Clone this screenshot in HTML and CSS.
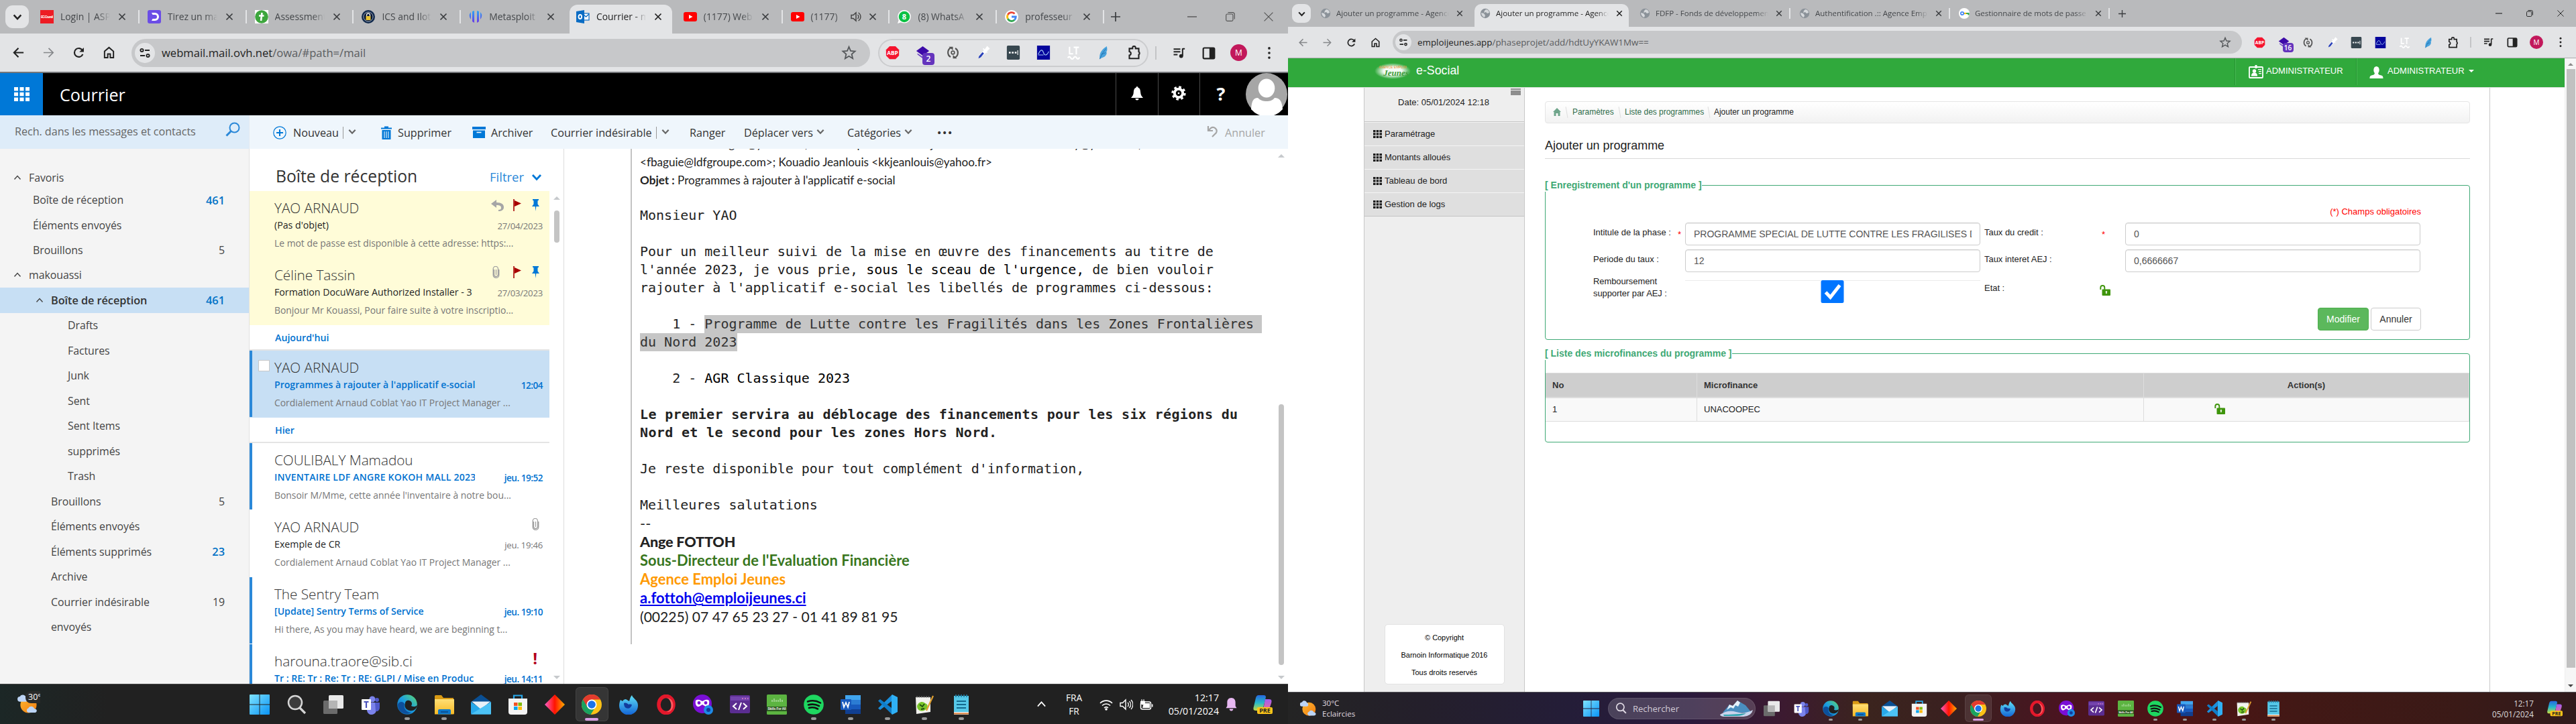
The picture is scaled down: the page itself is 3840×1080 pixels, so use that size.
FILE: index.html
```html
<!DOCTYPE html>
<html lang="fr">
<head>
<meta charset="utf-8">
<title>Courrier / e-Social</title>
<link rel="stylesheet" href="styles.css">
</head>
<body>
<svg class="defs" width="0" height="0" aria-hidden="true">
  <defs>
    <linearGradient id="g-win" x1="0" y1="0" x2="1" y2="1"><stop offset="0" stop-color="#7fe3ff"/><stop offset="1" stop-color="#0a94f5"/></linearGradient>
    <linearGradient id="g-edge" x1="0" y1="1" x2="1" y2="0"><stop offset="0" stop-color="#0c59a4"/><stop offset=".5" stop-color="#1b9de2"/><stop offset="1" stop-color="#5fdc6b"/></linearGradient>
    <linearGradient id="g-folder" x1="0" y1="0" x2="0" y2="1"><stop offset="0" stop-color="#ffdf75"/><stop offset="1" stop-color="#f7b924"/></linearGradient>
    <linearGradient id="g-diamond"><stop offset="0" stop-color="#ff5ec8"/><stop offset=".5" stop-color="#ff1300"/><stop offset="1" stop-color="#ffb000"/></linearGradient>
    <linearGradient id="g-fox" x1="0" y1="0" x2="0" y2="1"><stop offset="0" stop-color="#5fe0f5"/><stop offset="1" stop-color="#1263d6"/></linearGradient>
    <linearGradient id="g-cop1" x1="0" y1="0" x2="0" y2="1"><stop offset="0" stop-color="#2667e0"/><stop offset=".5" stop-color="#27b9c9"/><stop offset="1" stop-color="#c8dc3c"/></linearGradient>
    <linearGradient id="g-cop2" x1="0" y1="0" x2="0" y2="1"><stop offset="0" stop-color="#a15cf0"/><stop offset="1" stop-color="#f5718c"/></linearGradient>
    <linearGradient id="g-sun" x1="0" y1="0" x2="1" y2="1"><stop offset="0" stop-color="#ffb52e"/><stop offset="1" stop-color="#f07d12"/></linearGradient>
    <linearGradient id="g-meta" x1="0" y1="0" x2="0" y2="1"><stop offset="0" stop-color="#2ba6f5"/><stop offset="1" stop-color="#6a35e8"/></linearGradient>
  </defs>
  <symbol id="i-down" viewBox="0 0 12 12"><path d="M2 4l4 4.3L10 4" fill="none" stroke="currentColor" stroke-width="1.9"/></symbol>
  <symbol id="i-up" viewBox="0 0 12 12"><path d="M1.500 8.500L6 3.500l4.500 5" fill="none" stroke="currentColor" stroke-width="1.400"/></symbol>
  <symbol id="i-x" viewBox="0 0 12 12"><path d="M1.500 1.500l9 9M10.500 1.500l-9 9" stroke="currentColor" stroke-width="1.700"/></symbol>
  <symbol id="i-xthin" viewBox="0 0 12 12"><path d="M.5.500l11 11M11.500.500l-11 11" stroke="currentColor" stroke-width="1"/></symbol>
  <symbol id="i-min" viewBox="0 0 12 12"><path d="M0 6h12" stroke="currentColor" stroke-width="1.200"/></symbol>
  <symbol id="i-max" viewBox="0 0 12 12"><rect x=".6" y="2.600" width="8.800" height="8.800" rx="1.600" fill="none" stroke="currentColor"/><path d="M3 .6h5.800a2.600 2.600 0 0 1 2.600 2.600V9" fill="none" stroke="currentColor"/></symbol>
  <symbol id="i-plus" viewBox="0 0 14 14"><path d="M7 0v14M0 7h14" stroke="currentColor" stroke-width="1.700"/></symbol>
  <symbol id="i-back" viewBox="0 0 20 20"><path d="M18 10H3.500M10 3L3 10l7 7" fill="none" stroke="currentColor" stroke-width="2.200"/></symbol>
  <symbol id="i-fwd" viewBox="0 0 20 20"><path d="M2 10h14.500M10 3l7 7-7 7" fill="none" stroke="currentColor" stroke-width="1.800"/></symbol>
  <symbol id="i-reload" viewBox="0 0 20 20"><path d="M16.200 12.500A6.800 6.800 0 1 1 16 7" fill="none" stroke="currentColor" stroke-width="2.300"/><path d="M17.800 2v7h-7z" fill="currentColor"/></symbol>
  <symbol id="i-home" viewBox="0 0 20 20"><path d="M3 8l7-6 7 6v10h-5v-6H8v6H3z" fill="none" stroke="currentColor" stroke-width="2.100"/></symbol>
  <symbol id="i-tune" viewBox="0 0 18 18"><path d="M9 5h7M2 13h7" stroke="currentColor" stroke-width="2"/><circle cx="4.500" cy="5" r="2.100" fill="none" stroke="currentColor" stroke-width="1.900"/><circle cx="13.500" cy="13" r="2.100" fill="none" stroke="currentColor" stroke-width="1.900"/></symbol>
  <symbol id="i-star" viewBox="0 0 24 24"><path d="M12 3l2.600 6.300 6.900.6-5.200 4.500 1.600 6.700L12 17.500 6.100 21.100l1.600-6.700L2.500 9.900l6.900-.6z" fill="none" stroke="currentColor" stroke-width="1.900"/></symbol>
  <symbol id="i-abp" viewBox="0 0 24 24"><path d="M7 1h10l6 6v10l-6 6H7l-6-6V7z" fill="#f5142e"/><text x="12" y="16" font-size="9.500" font-weight="700" text-anchor="middle" fill="#fff" font-family="Open Sans, sans-serif">ABP</text></symbol>
  <symbol id="i-stack" viewBox="0 0 24 24"><path d="M12 1l11 8-11 8L1 9z" fill="#3d0aa8"/><path d="M3 13l9 6 9-6v2l-9 7-9-7z" fill="#6a3fc4"/></symbol>
  <symbol id="i-sync" viewBox="0 0 24 24"><path d="M9 3.500a9 9 0 0 0-1 16M15 20.500a9 9 0 0 0 1-16" fill="none" stroke="#555" stroke-width="2.500"/><path d="M5 2h7v6zM19 22h-7v-6z" fill="#555"/><circle cx="12" cy="12" r="2.700" fill="none" stroke="#555" stroke-width="2"/></symbol>
  <symbol id="i-drop" viewBox="0 0 24 24"><path d="M4 22l1-5 9-10 4 4L8 20z" fill="#fff"/><path d="M4 22l1-4 6-7 2.500 2.500L8 20z" fill="#2940b8"/><path d="M12 5l7 7M15 8l4-6 3 3-5 5z" stroke="#fff" stroke-width="2" fill="#fff"/></symbol>
  <symbol id="i-dots3" viewBox="0 0 24 24"><rect x="1" y="0" width="22" height="24" rx="2" fill="#37474f"/><path d="M4.500 10.500h3v3h-3zM9.500 10.500h3v3h-3zM14.500 10.500h3v3h-3zM19 8h1.300v8H19z" fill="#fff"/></symbol>
  <symbol id="i-wave" viewBox="0 0 24 24"><rect x="1" width="22" height="24" fill="#05059c"/><path d="M3 15c4-9 7-9 9-3s6 5 9-2M3 16h9" fill="none" stroke="#9fc3f0" stroke-width="1.300"/></symbol>
  <symbol id="i-lt" viewBox="0 0 24 24"><path d="M5 2v12h6M12 3h9M16.500 3v12M2 21q2.500-4 5 0t5 0 5 0 5-1" fill="none" stroke="#fff" stroke-width="2.400"/></symbol>
  <symbol id="i-feather" viewBox="0 0 24 24"><path d="M5 23c-1-8 1-15 12-22 1 5 1 8-1 10 2 0 1 8-8 10z" fill="#4aa3dd"/><path d="M5 23c3-7 5-11 11-18M8 15l7-3" stroke="#1d6fae" fill="none"/></symbol>
  <symbol id="i-puzzle" viewBox="0 0 24 24"><path d="M4 5h5.500V3.500a2.500 2.500 0 0 1 5 0V5H20v5.500a3 3 0 0 1 0 5V22H4v-5.500a3.200 3.200 0 0 0 0-6.300z" fill="none" stroke="#222" stroke-width="2.400"/></symbol>
  <symbol id="i-queue" viewBox="0 0 24 24"><path d="M3 5h12M3 10h12M3 15h7M19 4v13M19 4.500h4" stroke="#222" stroke-width="2.400" fill="none"/><circle cx="16.500" cy="17.500" r="3.500" fill="#222"/></symbol>
  <symbol id="i-panel" viewBox="0 0 24 24"><rect x="2" y="3" width="20" height="19" rx="2" fill="none" stroke="#222" stroke-width="2.600"/><path d="M13 3h9v19h-9z" fill="#222"/></symbol>
  <symbol id="i-kebab" viewBox="0 0 24 24"><circle cx="12" cy="3.500" r="2.200" fill="#222"/><circle cx="12" cy="12" r="2.200" fill="#222"/><circle cx="12" cy="20.500" r="2.200" fill="#222"/></symbol>

  <symbol id="f-ec" viewBox="0 0 20 20"><rect width="20" height="20" fill="#ed1c24"/><text x="10" y="11.500" font-size="5" font-weight="700" textLength="18" text-anchor="middle" fill="#fff" font-family="Liberation Sans, sans-serif">EC-Council</text></symbol>
  <symbol id="f-tirez" viewBox="0 0 20 20"><rect width="20" height="20" rx="3" fill="#6b4de6"/><path d="M6 4h5a6 6 0 0 1 0 12H6l1.500-3H11a3 3 0 0 0 0-6H7.500z" fill="#fff"/></symbol>
  <symbol id="f-assess" viewBox="0 0 20 20"><rect width="20" height="20" fill="#fff"/><circle cx="10" cy="10" r="9.800" fill="#3da63d"/><path d="M10.500 4L9 16M6 8.500h7.500" stroke="#fff" stroke-width="2.600"/></symbol>
  <symbol id="f-ics" viewBox="0 0 20 20"><circle cx="10" cy="10" r="10" fill="#122a4d"/><circle cx="10" cy="10" r="7" fill="#0a1730" stroke="#c8d2e0" stroke-width=".8"/><rect x="6.500" y="9" width="7" height="6" fill="#e8c333"/><path d="M7.500 9V7.500a2.500 2.500 0 0 1 5 0V9" fill="none" stroke="#e8e8e8" stroke-width="1.400"/></symbol>
  <symbol id="f-meta" viewBox="0 0 20 20"><path d="M3 3v11a9 9 0 0 1-2-8zM8 1v18l-3-2V2zM12 1v18l3-2V2zM17 3v11a9 9 0 0 0 2-8z" fill="url(#g-meta)"/></symbol>
  <symbol id="f-owa" viewBox="0 0 20 20"><rect x="10" y="5" width="9" height="10" fill="#fff" stroke="#0a6cc4" stroke-width="1.200"/><path d="M11 7l3.500 3L19 6" fill="none" stroke="#0a6cc4" stroke-width="1.400"/><path d="M0 2l12-2v20L0 18z" fill="#0a6cc4"/><ellipse cx="5.800" cy="10" rx="2.300" ry="3" fill="none" stroke="#fff" stroke-width="1.800"/></symbol>
  <symbol id="f-yt" viewBox="0 0 20 20"><rect y="3" width="20" height="14" rx="3" fill="#f00"/><path d="M8 7l5.500 3L8 13z" fill="#fff"/></symbol>
  <symbol id="f-wa" viewBox="0 0 20 20"><circle cx="10" cy="9.800" r="9.800" fill="#fff"/><path d="M0 20l2-6 4 4z" fill="#fff"/><circle cx="10" cy="10" r="8.300" fill="#0cc143"/><text x="10" y="14" font-size="11" font-weight="700" text-anchor="middle" fill="#fff" font-family="Open Sans, sans-serif">8</text></symbol>
  <symbol id="f-google" viewBox="0 0 20 20"><circle cx="10" cy="10" r="10" fill="#fff"/><g fill="none" stroke-width="2.800"><path d="M14.500 5.500A6.400 6.400 0 0 0 4.300 7" stroke="#ea4335"/><path d="M4.300 7a6.400 6.400 0 0 0 0 6" stroke="#fbbc05"/><path d="M4.300 13a6.400 6.400 0 0 0 10 1.800" stroke="#34a853"/><path d="M14.300 14.800A6.400 6.400 0 0 0 16.300 10H10" stroke="#4285f4"/></g></symbol>
  <symbol id="f-globe" viewBox="0 0 16 16"><circle cx="8" cy="8" r="7.200" fill="#8b9299"/><path d="M9 2c3 0 5 3 5 5l-3 1-2-2-3 1 1-3zM2 7l4 1 2 3-1 3C4 13 2 10 2 7z" fill="#d5d8db"/></symbol>
  <symbol id="f-key" viewBox="0 0 16 16"><circle cx="8" cy="8" r="8" fill="#fff"/><circle cx="5" cy="8" r="2.200" fill="none" stroke="#4285f4" stroke-width="1.700"/><path d="M8 8h3" stroke="#fbbc05" stroke-width="2.200"/><path d="M11 8h3.500v2.500" stroke="#34a853" stroke-width="2.200" fill="none"/></symbol>
  <symbol id="i-audio" viewBox="0 0 16 16"><path d="M1 5.500h3L8 2v12l-4-3.500H1z" fill="none" stroke="#444" stroke-width="1.500"/><path d="M10.500 5a4 4 0 0 1 0 6M11.500 2a7 7 0 0 1 0 12" fill="none" stroke="#444" stroke-width="1.400"/></symbol>

  <symbol id="o-waffle" viewBox="0 0 23 21"><path d="M0 0h6v5.500H0zM8.500 0h6v5.500h-6zM17 0h6v5.500h-6zM0 7.700h6v5.500H0zM8.500 7.700h6v5.500h-6zM17 7.700h6v5.500h-6zM0 15.500h6V21H0zM8.500 15.500h6V21h-6zM17 15.500h6V21h-6z" fill="#fff"/></symbol>
  <symbol id="o-bell" viewBox="0 0 20 22"><path d="M10 1c1 0 1.500.8 1.500 1.700C14.500 3.500 15 7 15.200 10c.2 3 1.300 5.500 3.800 8H1c2.500-2.500 3.600-5 3.800-8C5 7 5.500 3.500 8.500 2.700 8.500 1.800 9 1 10 1zM7.500 19h5a2.500 2.500 0 0 1-5 0z" fill="#fff"/></symbol>
  <symbol id="o-gear" viewBox="0 0 22 22"><circle cx="11" cy="11" r="6.200" fill="none" stroke="#fff" stroke-width="4"/><circle cx="11" cy="11" r="9.200" fill="none" stroke="#fff" stroke-width="3" stroke-dasharray="3.600 3.625"/><circle cx="11" cy="11" r="1.300" fill="#fff"/></symbol>
  <symbol id="o-search" viewBox="0 0 22 22"><circle cx="13.500" cy="8.500" r="7" fill="none" stroke="#2b88d8" stroke-width="2"/><path d="M8.500 13.500L1.500 20.500" stroke="#2b88d8" stroke-width="3"/></symbol>
  <symbol id="o-add" viewBox="0 0 20 20"><circle cx="10" cy="10" r="9.200" fill="none" stroke="#0078d7" stroke-width="1.200"/><path d="M10 5v10M5 10h10" stroke="#0078d7" stroke-width="2"/></symbol>
  <symbol id="o-trash" viewBox="0 0 16 20"><path d="M0 2.500h5V.5h6v2h5v2H0zM1.500 6h13v14h-13z" fill="#0078d7"/><path d="M5 8v10M8 8v10M11 8v10" stroke="#fff" stroke-width="1"/></symbol>
  <symbol id="o-archive" viewBox="0 0 20 17"><path d="M0 0h20v4H0zM1 5.500h18V17H1z" fill="#0078d7"/><path d="M6.500 8.500h7" stroke="#fff" stroke-width="1.600"/></symbol>
  <symbol id="o-undo" viewBox="0 0 16 18"><path d="M2 1v7h7M2 8l4-4a5.500 5.500 0 0 1 8 7L8 17" fill="none" stroke="#a6a6a6" stroke-width="2.200"/></symbol>
  <symbol id="o-reply" viewBox="0 0 19 17"><path d="M8 0L0 6l8 6V8c5 0 7 1 7 4 0 2-1 3-4 3v2c5 0 8-2 8-6 0-4-3-7-11-7z" fill="#a6a6a6"/></symbol>
  <symbol id="o-flag" viewBox="0 0 13 18"><path d="M1 0v18" stroke="#a80000" stroke-width="1.600"/><path d="M2 2l10 4.500L2 11z" fill="#a80000"/></symbol>
  <symbol id="o-pin" viewBox="0 0 11 18"><path d="M1 0h9v1.500L8.500 2.500v5L11 11H6.300l-.8 7-.8-7H0l2.500-3.500v-5L1 1.500z" fill="#0078d7"/></symbol>
  <symbol id="o-clip" viewBox="0 0 11 18"><path d="M2.500 5v7.500a3 3 0 0 0 6 0V4a3.400 3.400 0 0 0-7.300 0v9.200a4.300 4.300 0 0 0 8.600 0V5M5.500 5v8" fill="none" stroke="#a0a0a0" stroke-width="1.300"/></symbol>
  <symbol id="o-avatar" viewBox="0 0 62 63"><ellipse cx="31" cy="31.500" rx="31" ry="31.500" fill="#a6a6a6"/><ellipse cx="31" cy="22.500" rx="12.300" ry="14" fill="#fff"/><path d="M8 54c1-12 3-17 10-17 4 4 8 5 13 5s9-1 12-5c8 0 11 5 12 17a31 31 0 0 1-47 0z" fill="#fff"/></symbol>

  <symbol id="t-win" viewBox="0 0 30 30"><path d="M0 1a1 1 0 0 1 1-1h13.500v14.500H0zM15.500 0H29a1 1 0 0 1 1 1v13.500H15.500zM0 15.500h14.500V30H1a1 1 0 0 1-1-1zM15.500 15.500H30V29a1 1 0 0 1-1 1H15.500z" fill="url(#g-win)"/></symbol>
  <symbol id="t-search" viewBox="0 0 30 30"><circle cx="13" cy="12" r="10" fill="#3c3c3c" stroke="#d5d5d5" stroke-width="2.500"/><path d="M20 20l8 8" stroke="#d5d5d5" stroke-width="3.200"/></symbol>
  <symbol id="t-mag" viewBox="0 0 30 30"><circle cx="13" cy="12" r="10" fill="none" stroke="#e0dae4" stroke-width="3"/><path d="M20 20l8 8" stroke="#e0dae4" stroke-width="3.600"/></symbol>
  <symbol id="t-view" viewBox="0 0 30 30"><rect x="0" y="9" width="21" height="20" rx="1.500" fill="#6b6b6b"/><rect x="8" y="1" width="22" height="20" rx="1.500" fill="#e9e9e9"/><path d="M8 9h13v12H8z" fill="#b5b5b5"/></symbol>
  <symbol id="t-teams" viewBox="0 0 30 30"><circle cx="18" cy="7" r="4.500" fill="#7b83eb"/><circle cx="25" cy="8" r="3" fill="#5059c9"/><path d="M10 12h14v10a7 7 0 0 1-14 2z" fill="#7b83eb"/><path d="M22 12h7v8a5 5 0 0 1-6 5z" fill="#5059c9"/><rect x="2" y="7" width="14" height="16" rx="1" fill="#fff"/><path d="M5.500 11h7M9 11v9" stroke="#4b53bc" stroke-width="2.200"/></symbol>
  <symbol id="t-edge" viewBox="0 0 30 30"><circle cx="15" cy="15" r="14.800" fill="url(#g-edge)"/><path d="M12 13c0-3 3-5 6-4 4 1 5 5 3 8 3 2 7 1 9-1-1 6-6 9-11 8-6-1-9-6-7-11z" fill="#202020"/><path d="M11 14c-2 7 3 13 10 13-9 5-20-1-20-12 2-5 8-5 10-1z" fill="#0d4f9b"/></symbol>
  <symbol id="t-folder" viewBox="0 0 30 30"><path d="M1 2.500a1.500 1.500 0 0 1 1.500-1.500H11l3 4h15v6H1z" fill="#d99a14"/><path d="M1 7h29v21a1.500 1.500 0 0 1-1.500 1.500H1z" fill="url(#g-folder)"/><path d="M6 29.500V24a2 2 0 0 1 2-2h15a2 2 0 0 1 2 2v5.500z" fill="#0d78c9"/><path d="M10 26h11" stroke="#0a4f93" stroke-width="2"/></symbol>
  <symbol id="t-mail" viewBox="0 0 30 30"><path d="M0 11L15 0l15 11-15 9z" fill="#0a4f93"/><path d="M3 11h24L15 22z" fill="#e9f1f8"/><path d="M0 11l15 10L30 11v17a1.500 1.500 0 0 1-1.500 1.500h-27A1.500 1.500 0 0 1 0 28z" fill="#28a8ea"/><path d="M1 10.500h28L15 22z" fill="#e9f1f8"/><path d="M0 29.500L30 11v18.500z" fill="#4cc2f5"/></symbol>
  <symbol id="t-store" viewBox="0 0 30 30"><path d="M9 7V1.500h12V7" fill="none" stroke="#28a8ea" stroke-width="2.200"/><path d="M1 6h28v20a4 4 0 0 1-4 4H5a4 4 0 0 1-4-4z" fill="#f3f3f3"/><path d="M9 12h5.500v5H9z" fill="#f25022"/><path d="M15.500 12H21v5h-5.500z" fill="#7fba00"/><path d="M9 18h5.500v5H9z" fill="#00a4ef"/><path d="M15.500 18H21v5h-5.500z" fill="#ffb900"/></symbol>
  <symbol id="t-diamond" viewBox="0 0 30 30"><path d="M15 0l15 15-15 15L0 15z" fill="url(#g-diamond)"/></symbol>
  <symbol id="t-chrome" viewBox="0 0 30 30"><circle cx="15" cy="15" r="15" fill="#fbc116"/><path d="M2 7.500A15 15 0 0 0 13.500 30L21 18z" fill="#1aa260"/><path d="M15 7.500h13a15 15 0 0 0-26 0l6.500 11z" fill="#e33b2e"/><circle cx="15" cy="15" r="7.500" fill="#fff"/><circle cx="15" cy="15" r="5.800" fill="#1a73e8"/></symbol>
  <symbol id="t-fox" viewBox="0 0 30 30"><path d="M3 8l3 2c1-2 3-3 5-3l5 3c1-4 2-7 4-9 1 5 9 7 9 15a14 14 0 0 1-28 1c0-4 1-7 2-9z" fill="url(#g-fox)"/><path d="M8 13c3-1 5 0 7 2 2-1 4 0 5 0-1 5-5 7-9 5-2-1-3-4-3-7z" fill="#123c9c"/></symbol>
  <symbol id="t-opera" viewBox="0 0 30 30"><ellipse cx="15" cy="15" rx="11" ry="12.600" fill="none" stroke="#e3182b" stroke-width="5.500"/><path d="M15 5c8 0 12 20 0 21 14 2 14-22 0-21z" fill="#ff5a5f"/></symbol>
  <symbol id="t-mask" viewBox="0 0 30 30"><circle cx="14" cy="14" r="14" fill="#7a0fd6"/><path d="M4 9c4-3 8 0 10 1 2-1 6-4 10-1 1 5-1 10-5 9l-5-3-5 3c-4 1-6-4-5-9z" fill="#fff"/><circle cx="9" cy="12.500" r="2.400" fill="#7a0fd6"/><circle cx="19" cy="12.500" r="2.400" fill="#7a0fd6"/><circle cx="23" cy="23" r="7" fill="#1e8ae6"/><circle cx="23" cy="23" r="3" fill="#123c9c"/></symbol>
  <symbol id="t-code" viewBox="0 0 30 30"><rect y="1" width="30" height="27" rx="2" fill="#5b2d91"/><path d="M1 3h28v6H1z" fill="#7444ad"/><path d="M18 6h2M22 6h2M26 6h1.500" stroke="#e080c8" stroke-width="1.500"/><path d="M10 13l-5 4.500 5 4.500M20 13l5 4.500-5 4.500M17 12l-4 11" fill="none" stroke="#fff" stroke-width="2"/></symbol>
  <symbol id="t-skills" viewBox="0 0 30 30"><rect width="30" height="30" rx="1.500" fill="#5cb441"/><path d="M0 18h30v7H0z" fill="#2d5a21"/><path d="M8 8v3M11 6v5M14 8v3M17 8v3M20 6v5M23 8v3" stroke="#d8f0d0"/><text x="15" y="23.300" font-size="5" font-weight="700" textLength="27" lengthAdjust="spacingAndGlyphs" text-anchor="middle" fill="#fff" font-family="Liberation Sans, sans-serif">Skills For All</text></symbol>
  <symbol id="t-spotify" viewBox="0 0 30 30"><circle cx="15" cy="15" r="14.800" fill="#1ed760"/><path d="M6 10.500c6-2 13-1.500 19 2M7 15.500c5-1.500 11-1 16 1.700M8 20c4-1.300 9-.8 13 1.500" fill="none" stroke="#111" stroke-width="2.600" stroke-linecap="round"/></symbol>
  <symbol id="t-word" viewBox="0 0 30 30"><path d="M7 1h23v7H7z" fill="#41a5ee"/><path d="M7 8h23v7H7z" fill="#2b7cd3"/><path d="M7 15h23v7H7z" fill="#185abd"/><path d="M7 22h23v7H7z" fill="#103f91"/><rect y="7" width="16" height="16" rx="1" fill="#185abd"/><path d="M3 11l2 8 3-7 3 7 2-8" fill="none" stroke="#fff" stroke-width="1.800"/></symbol>
  <symbol id="t-vscode" viewBox="0 0 30 30"><path d="M22 0l8 4v22l-8 4-1-1V1z" fill="#2fb0f5"/><path d="M21 1v9L4 23l-3-2.500z" fill="#1a8fdc"/><path d="M21 29v-9L4 7 1 9.500z" fill="#0f7dc9"/></symbol>
  <symbol id="t-npp" viewBox="0 0 30 30"><path d="M2 4h22v22L3 29z" fill="#f2f2ee"/><path d="M3 3.500h20" stroke="#666" stroke-width="2" stroke-dasharray="2 1.500"/><path d="M4 17c2-6 8-8 12-4 5 1 5 8 0 10-4 3-12 2-12-6z" fill="#79c62a"/><path d="M8 15l4 3 3-4M10 22l5-1" stroke="#1e4a12" stroke-width="1.800" fill="none"/><path d="M28 2L18 24" stroke="#e0a030" stroke-width="2.200"/></symbol>
  <symbol id="t-note" viewBox="0 0 30 30"><path d="M4 2h22v26H4z" fill="#56c8e8"/><path d="M4 26h22v4H4z" fill="#e6e6e6"/><path d="M4 28.500h22" stroke="#d9742a" stroke-width="1.800"/><path d="M8 10h14M8 15h14M8 20h14" stroke="#146a8f" stroke-width="2"/><path d="M7 0v4M11 0v4M15 0v4M19 0v4M23 0v4" stroke="#1d7fa5" stroke-width="1.600"/></symbol>
  <symbol id="t-weather" viewBox="0 0 30 30"><circle cx="16" cy="16" r="12.500" fill="url(#g-sun)"/><path d="M3 11a4 4 0 0 1 0-8c2-4 8-3 9 1 3 0 4 7 0 7zM16 28a3.600 3.600 0 0 1 0-7c2-4 8-3 9 1 5 0 5 6 0 6z" fill="#bcd4f5"/></symbol>
  <symbol id="t-copilot" viewBox="0 0 30 30"><path d="M9 1h8c2 0 3 1 3 3l-4 16c-1 3-3 4-5 4H5c-4 0-4-3-3-6L5 5c1-3 2-4 4-4z" fill="url(#g-cop1)"/><path d="M19 7h6c4 0 4 3 3 6l-3 9c-1 3-2 4-4 4h-7c3-4 4-16 5-19z" fill="url(#g-cop2)"/><rect x="7" y="19" width="23" height="10" rx="2" fill="#fcc419"/><text x="18.500" y="27.300" font-size="9" font-weight="700" text-anchor="middle" fill="#222" font-family="Open Sans, sans-serif">PRE</text></symbol>
  <symbol id="y-wifi" viewBox="0 0 20 20"><path d="M1 8a12.500 12.500 0 0 1 18 0M4 11.500a8.500 8.500 0 0 1 12 0M7 15a4.500 4.500 0 0 1 6 0" fill="none" stroke="#fff" stroke-width="1.600"/><circle cx="10" cy="17" r="1.800" fill="#fff"/></symbol>
  <symbol id="y-vol" viewBox="0 0 20 20"><path d="M1 7.500h3.500L9 3v14l-4.500-4.500H1z" fill="none" stroke="#fff" stroke-width="1.400"/><path d="M12 7a4 4 0 0 1 0 6M14.500 5a7 7 0 0 1 0 10M17 3a10 10 0 0 1 0 14" fill="none" stroke="#fff" stroke-width="1.300"/></symbol>
  <symbol id="y-bat" viewBox="0 0 20 20"><rect x="1.500" y="6" width="15" height="11" rx="2.500" fill="none" stroke="#fff" stroke-width="1.500"/><path d="M6 8h9v7H4z" fill="#fff"/><path d="M18.700 9.500v4" stroke="#fff" stroke-width="1.600"/><path d="M3 2v3M6 2v3M1.500 5h6v2a3 3 0 0 1-6 0z" fill="#fff" stroke="#fff"/></symbol>
  <symbol id="y-bell" viewBox="0 0 18 22"><path d="M9 1c4 0 6.500 3 6.500 7v6l2 3H.5l2-3V8C2.500 4 5 1 9 1zM6 18.500h6a3 3 0 0 1-6 0z" fill="#e8b9f2"/></symbol>
  <symbol id="e-lock" viewBox="0 0 16 16"><path d="M1.300 7V4a3 3 0 0 1 6 0v3" fill="none" stroke="#3f950c" stroke-width="1.900"/><rect x="3.500" y="6.500" width="12.500" height="9.500" rx="1" fill="#3f950c"/><path d="M9 9.500h1.800L10.300 13H9.500z" fill="#fff" stroke="#fff" stroke-width=".5"/></symbol>
  <symbol id="e-grid" viewBox="0 0 13 12"><path d="M0 0h3.500v3.300H0zM4.700 0h3.500v3.300H4.700zM9.400 0h3.600v3.300H9.400zM0 4.300h3.500v3.300H0zM4.700 4.300h3.500v3.300H4.700zM9.400 4.300h3.600v3.300H9.400zM0 8.700h3.500V12H0zM4.700 8.700h3.500V12H4.700zM9.400 8.700h3.600V12H9.400z" fill="#1c1c1c"/></symbol>
  <symbol id="e-home" viewBox="0 0 12 12"><path d="M6 0l6 6h-1.500v6h-3V8h-3v4h-3V6H0z" fill="#6fa58b"/></symbol>
  <symbol id="e-badge" viewBox="0 0 22 20"><rect x="1" y="3" width="20" height="16" rx="1" fill="none" stroke="#fff" stroke-width="1.800"/><path d="M9.500 0h3v5h-3z" fill="#fff"/><circle cx="8.500" cy="9" r="2.700" fill="#fff"/><path d="M4 16.500c0-4 2-5 4.500-5s4.500 1 4.500 5zM14 6h5v1.200h-5zM15 9h4v1.200h-4zM15 12h4v1.200h-4z" fill="#fff"/></symbol>
  <symbol id="e-user" viewBox="0 0 20 18"><ellipse cx="10" cy="5.500" rx="4.200" ry="5.500" fill="#fff"/><path d="M7.500 9h5c0 3 1 3.500 4 4.300 3 .7 3.500 2 3.500 4.700H0c0-2.700.5-4 3.500-4.700 3-.8 4-1.300 4-4.300z" fill="#fff"/></symbol>
</svg>

<main class="desktop">

<section class="screen screen-left">
  <div class="tabstrip">
    <button class="tab-search"><svg><use href="#i-down"/></svg></button>
    <div class="tabs">
      <div class="tab"><svg class="fav"><use href="#f-ec"/></svg><span class="ttl">Login | ASP</span><svg class="x"><use href="#i-x"/></svg></div>
      <div class="tab"><svg class="fav"><use href="#f-tirez"/></svg><span class="ttl">Tirez un ma</span><svg class="x"><use href="#i-x"/></svg></div>
      <div class="tab"><svg class="fav"><use href="#f-assess"/></svg><span class="ttl">Assessment</span><svg class="x"><use href="#i-x"/></svg></div>
      <div class="tab"><svg class="fav"><use href="#f-ics"/></svg><span class="ttl">ICS and Ilot</span><svg class="x"><use href="#i-x"/></svg></div>
      <div class="tab nosep"><svg class="fav"><use href="#f-meta"/></svg><span class="ttl">Metasploit</span><svg class="x"><use href="#i-x"/></svg></div>
      <div class="tab active"><svg class="fav"><use href="#f-owa"/></svg><span class="ttl">Courrier - m</span><svg class="x"><use href="#i-x"/></svg></div>
      <div class="tab"><svg class="fav yt"><use href="#f-yt"/></svg><span class="ttl">(1177) Web</span><svg class="x"><use href="#i-x"/></svg></div>
      <div class="tab"><svg class="fav yt"><use href="#f-yt"/></svg><span class="ttl ttl-audio">(1177) </span><svg class="aud"><use href="#i-audio"/></svg><svg class="x"><use href="#i-x"/></svg></div>
      <div class="tab"><svg class="fav"><use href="#f-wa"/></svg><span class="ttl">(8) WhatsA</span><svg class="x"><use href="#i-x"/></svg></div>
      <div class="tab"><svg class="fav"><use href="#f-google"/></svg><span class="ttl">professeur</span><svg class="x"><use href="#i-x"/></svg></div>
    </div>
    <svg class="newtab"><use href="#i-plus"/></svg>
    <div class="winbtns"><svg><use href="#i-min"/></svg><svg><use href="#i-max"/></svg><svg><use href="#i-xthin"/></svg></div>
  </div>
  <div class="toolbar">
    <div class="nav"><svg><use href="#i-back"/></svg><svg class="off"><use href="#i-fwd"/></svg><svg><use href="#i-reload"/></svg><svg><use href="#i-home"/></svg></div>
    <div class="omnibox"><span class="tune"><svg><use href="#i-tune"/></svg></span><span class="url">webmail.mail.ovh.net<i>/owa/#path=/mail</i></span><svg class="bookmark"><use href="#i-star"/></svg></div>
    <div class="exts"><svg><use href="#i-abp"/></svg><span class="ext"><svg><use href="#i-stack"/></svg><b class="count">2</b></span><svg><use href="#i-sync"/></svg><svg><use href="#i-drop"/></svg><svg><use href="#i-dots3"/></svg><svg><use href="#i-wave"/></svg><svg><use href="#i-lt"/></svg><svg><use href="#i-feather"/></svg><svg><use href="#i-puzzle"/></svg></div>
    <div class="tools"><svg><use href="#i-queue"/></svg><svg><use href="#i-panel"/></svg><span class="profile">M</span><svg><use href="#i-kebab"/></svg></div>
  </div>

  <header class="owa-head">
    <div class="waffle"><svg><use href="#o-waffle"/></svg></div>
    <h1>Courrier</h1>
    <div class="owa-actions"><span><svg><use href="#o-bell"/></svg></span><span><svg><use href="#o-gear"/></svg></span><span class="help">?</span><svg class="avatar"><use href="#o-avatar"/></svg></div>
  </header>

  <div class="owa-bar">
    <div class="owa-search"><span>Rech. dans les messages et contacts</span><svg><use href="#o-search"/></svg></div>
    <div class="commands">
      <svg class="c-add"><use href="#o-add"/></svg>
      <span class="cmd">Nouveau<i class="bar"></i><svg class="chev"><use href="#i-down"/></svg></span>
      <svg class="c-trash"><use href="#o-trash"/></svg><span>Supprimer</span>
      <svg class="c-arch"><use href="#o-archive"/></svg><span>Archiver</span>
      <span class="cmd">Courrier indésirable<i class="bar"></i><svg class="chev"><use href="#i-down"/></svg></span>
      <span>Ranger</span>
      <span class="cmd">Déplacer vers<svg class="chev wide"><use href="#i-down"/></svg></span>
      <span class="cmd">Catégories<svg class="chev wide"><use href="#i-down"/></svg></span>
      <span class="more">•••</span>
      <svg class="c-undo"><use href="#o-undo"/></svg><span class="muted">Annuler</span>
    </div>
  </div>

  <div class="owa-main">
    <nav class="folders">
      <div class="root first-root"><svg><use href="#i-up"/></svg>Favoris</div>
      <div class="fav-item">Boîte de réception<b>461</b></div>
      <div class="fav-item">Éléments envoyés</div>
      <div class="fav-item">Brouillons<em>5</em></div>
      <div class="root"><svg><use href="#i-up"/></svg>makouassi</div>
      <div class="selected"><svg><use href="#i-up"/></svg>Boîte de réception<b>461</b></div>
      <div class="sub">Drafts</div>
      <div class="sub">Factures</div>
      <div class="sub">Junk</div>
      <div class="sub">Sent</div>
      <div class="sub">Sent Items</div>
      <div class="sub">supprimés</div>
      <div class="sub">Trash</div>
      <div class="top">Brouillons<em>5</em></div>
      <div class="top">Éléments envoyés</div>
      <div class="top">Éléments supprimés<b>23</b></div>
      <div class="top">Archive</div>
      <div class="top">Courrier indésirable<em>19</em></div>
      <div class="top">envoyés</div>
    </nav>

    <section class="list">
      <div class="list-head"><h2>Boîte de réception</h2><span class="filter">Filtrer<svg><use href="#i-down"/></svg></span></div>
      <div class="list-body">
        <div class="msgs">
          <article class="msg pinned"><div class="who">YAO ARNAUD<span class="marks"><svg class="m-reply"><use href="#o-reply"/></svg><svg class="m-flag"><use href="#o-flag"/></svg><svg class="m-pin"><use href="#o-pin"/></svg></span></div><div class="subj"><span>(Pas d'objet)</span><time>27/04/2023</time></div><div class="prev">Le mot de passe est disponible à cette adresse: https:...</div></article>
          <article class="msg pinned"><div class="who">Céline Tassin<span class="marks"><svg class="m-clip"><use href="#o-clip"/></svg><svg class="m-flag"><use href="#o-flag"/></svg><svg class="m-pin"><use href="#o-pin"/></svg></span></div><div class="subj"><span>Formation DocuWare Authorized Installer - 3</span><time>27/03/2023</time></div><div class="prev">Bonjour Mr Kouassi, Pour faire suite à votre inscriptio...</div></article>
          <div class="group">Aujourd'hui</div>
          <article class="msg current unread"><i class="check"></i><div class="who">YAO ARNAUD</div><div class="subj"><span>Programmes à rajouter à l'applicatif e-social</span><time>12:04</time></div><div class="prev">Cordialement Arnaud Coblat Yao IT Project Manager ...</div></article>
          <div class="group">Hier</div>
          <article class="msg unread"><div class="who">COULIBALY Mamadou</div><div class="subj wide-subj"><span>INVENTAIRE LDF ANGRE KOKOH MALL 2023</span><time>jeu. 19:52</time></div><div class="prev">Bonsoir M/Mme, cette année l'inventaire à notre bou...</div></article>
          <article class="msg"><div class="who">YAO ARNAUD<span class="marks single"><svg class="m-clip"><use href="#o-clip"/></svg></span></div><div class="subj"><span>Exemple de CR</span><time>jeu. 19:46</time></div><div class="prev">Cordialement Arnaud Coblat Yao IT Project Manager ...</div></article>
          <article class="msg unread"><div class="who">The Sentry Team</div><div class="subj"><span>[Update] Sentry Terms of Service</span><time>jeu. 19:10</time></div><div class="prev">Hi there, As you may have heard, we are beginning t...</div></article>
          <article class="msg unread"><div class="who">harouna.traore@sib.ci<span class="marks single"><b class="bang">!</b></span></div><div class="subj"><span>Tr : RE: Tr : Re: Tr : RE: GLPI / Mise en Produc</span><time>jeu. 14:11</time></div></article>
        </div>
        <div class="scroll list-scroll"><i class="arr-up"></i><i class="thumb"></i><i class="arr-down"></i></div>
      </div>
    </section>

    <section class="reader">
      <div class="quote">
        <div class="hdr cut">Kouassi Marc &lt;bagna@yahoo.fr&gt;; Ernest Yapo Kouamé Adjoua Affoué Amenan &lt;ernesty@yahoo.fr&gt;; Amoin Konan Brou Bile &lt;amoin_k@yahoo.fr&gt;</div>
        <div class="hdr">&lt;fbaguie@ldfgroupe.com&gt;; Kouadio Jeanlouis &lt;kkjeanlouis@yahoo.fr&gt;</div>
        <div class="hdr obj"><b>Objet :</b> Programmes à rajouter à l'applicatif e-social</div>
<pre class="mono">Monsieur YAO

Pour un meilleur suivi de la mise en œuvre des financements au titre de
l'année 2023, je vous prie, <span class="ink">sous le sceau de l'urgence,</span> de bien vouloir
rajouter à l'applicatif e-social les libellés de programmes ci-dessous:

    1 - <mark>Programme de Lutte contre les Fragilités dans les Zones Frontalières </mark>
<mark>du Nord 2023</mark>

    2 - <span class="ink">AGR Classique 2023</span>

<b>Le premier servira au déblocage des financements pour les six régions du
Nord et le second pour les zones Hors Nord.</b>

Je reste disponible pour tout complément d'information,

Meilleures salutations
</pre>
        <div class="sig">
          <div class="dash">--</div>
          <div><b class="n">Ange FOTTOH</b></div>
          <div class="green">Sous-Directeur de l'Evaluation Financière</div>
          <div class="orange">Agence Emploi Jeunes</div>
          <div><a class="mailto">a.fottoh@emploijeunes.ci</a></div>
          <div class="phone">(00225) 07 47 65 23 27 - 01 41 89 81 95</div>
        </div>
      </div>
      <div class="scroll read-scroll"><i class="arr-up"></i><i class="thumb"></i><i class="arr-down"></i></div>
    </section>
  </div>

  <footer class="taskbar">
    <div class="weather"><svg><use href="#t-weather"/></svg><span class="temp">30°</span></div>
    <div class="apps">
      <span><svg><use href="#t-win"/></svg></span><span><svg><use href="#t-search"/></svg></span><span><svg><use href="#t-view"/></svg></span><span><svg><use href="#t-teams"/></svg></span><span class="run"><svg><use href="#t-edge"/></svg></span><span class="run"><svg><use href="#t-folder"/></svg></span><span><svg><use href="#t-mail"/></svg></span><span><svg><use href="#t-store"/></svg></span><span><svg><use href="#t-diamond"/></svg></span><span class="focus"><svg><use href="#t-chrome"/></svg></span><span><svg><use href="#t-fox"/></svg></span><span><svg><use href="#t-opera"/></svg></span><span><svg><use href="#t-mask"/></svg></span><span><svg><use href="#t-code"/></svg></span><span><svg><use href="#t-skills"/></svg></span><span class="run"><svg><use href="#t-spotify"/></svg></span><span class="run"><svg><use href="#t-word"/></svg></span><span class="run"><svg><use href="#t-vscode"/></svg></span><span class="run"><svg><use href="#t-npp"/></svg></span><span class="run"><svg><use href="#t-note"/></svg></span>
    </div>
    <div class="tray">
      <svg class="caret"><use href="#i-up"/></svg>
      <div class="lang">FRA<br>FR</div>
      <svg class="sys"><use href="#y-wifi"/></svg><svg class="sys"><use href="#y-vol"/></svg><svg class="sys"><use href="#y-bat"/></svg>
      <div class="clock">12:17<br>05/01/2024</div>
      <svg class="bell"><use href="#y-bell"/></svg>
      <svg class="copilot"><use href="#t-copilot"/></svg>
    </div>
  </footer>
</section>

<section class="screen screen-right">
  <div class="tabstrip">
    <button class="tab-search"><svg><use href="#i-down"/></svg></button>
    <div class="tabs">
      <div class="tab nosep"><svg class="fav"><use href="#f-globe"/></svg><span class="ttl">Ajouter un programme - Agence</span><svg class="x"><use href="#i-x"/></svg></div>
      <div class="tab active"><svg class="fav"><use href="#f-globe"/></svg><span class="ttl">Ajouter un programme - Agence</span><svg class="x"><use href="#i-x"/></svg></div>
      <div class="tab"><svg class="fav"><use href="#f-globe"/></svg><span class="ttl">FDFP - Fonds de développement</span><svg class="x"><use href="#i-x"/></svg></div>
      <div class="tab"><svg class="fav"><use href="#f-globe"/></svg><span class="ttl">Authentification .:: Agence Emplo</span><svg class="x"><use href="#i-x"/></svg></div>
      <div class="tab"><svg class="fav"><use href="#f-key"/></svg><span class="ttl">Gestionnaire de mots de passe</span><svg class="x"><use href="#i-x"/></svg></div>
    </div>
    <svg class="newtab"><use href="#i-plus"/></svg>
    <div class="winbtns"><svg><use href="#i-min"/></svg><svg><use href="#i-max"/></svg><svg><use href="#i-xthin"/></svg></div>
  </div>
  <div class="toolbar">
    <div class="nav"><svg class="off"><use href="#i-back"/></svg><svg class="off"><use href="#i-fwd"/></svg><svg><use href="#i-reload"/></svg><svg><use href="#i-home"/></svg></div>
    <div class="omnibox"><span class="tune"><svg><use href="#i-tune"/></svg></span><span class="url">emploijeunes.app<i>/phaseprojet/add/hdtUyYKAW1Mw==</i></span><svg class="bookmark"><use href="#i-star"/></svg></div>
    <div class="exts"><svg><use href="#i-abp"/></svg><span class="ext"><svg><use href="#i-stack"/></svg><b class="count">16</b></span><svg><use href="#i-sync"/></svg><svg><use href="#i-drop"/></svg><svg><use href="#i-dots3"/></svg><svg><use href="#i-wave"/></svg><svg><use href="#i-lt"/></svg><svg><use href="#i-feather"/></svg><svg><use href="#i-puzzle"/></svg></div>
    <div class="tools"><svg><use href="#i-queue"/></svg><svg><use href="#i-panel"/></svg><span class="profile">M</span><svg><use href="#i-kebab"/></svg></div>
  </div>

  <div class="page">
    <div class="page-view">
      <header class="es-head">
        <div class="logo"><small>AGENCE EMPLOI</small><b>Jeunes</b></div>
        <span class="brand">e-Social</span>
        <div class="es-user first"><svg><use href="#e-badge"/></svg>ADMINISTRATEUR</div>
        <div class="es-user second"><svg><use href="#e-user"/></svg>ADMINISTRATEUR<i class="tri"></i></div>
      </header>
      <div class="es-body">
        <aside class="es-side">
          <div class="date">Date: 05/01/2024 12:18<i class="toggle"></i></div>
          <div class="menu"><svg><use href="#e-grid"/></svg>Paramétrage</div>
          <div class="menu"><svg><use href="#e-grid"/></svg>Montants alloués</div>
          <div class="menu"><svg><use href="#e-grid"/></svg>Tableau de bord</div>
          <div class="menu last"><svg><use href="#e-grid"/></svg>Gestion de logs</div>
          <div class="copy"><p>© Copyright</p><p>Barnoin Informatique 2016</p><p>Tous droits reservés</p></div>
        </aside>
        <section class="es-content">
          <div class="crumbs"><svg><use href="#e-home"/></svg><i></i><a>Paramètres</a><i></i><a>Liste des programmes</a><i></i><span>Ajouter un programme</span></div>
          <h3>Ajouter un programme</h3>
          <fieldset class="fs-form">
            <legend>[ Enregistrement d'un programme ]</legend>
            <div class="req">(*) Champs obligatoires</div>
            <div class="form">
              <label>Intitule de la phase :</label><em>*</em><div class="input"><span>PROGRAMME SPECIAL DE LUTTE CONTRE LES FRAGILISES DANS LES</span></div><label class="l2">Taux du credit :</label><em>*</em><div class="input"><span>0</span></div>
              <label>Periode du taux :</label><em></em><div class="input"><span>12</span></div><label class="l2">Taux interet AEJ :</label><em></em><div class="input"><span>0,6666667</span></div>
              <label class="two">Remboursement<br>supporter par AEJ :</label><em></em><div class="checkcell"><svg class="checkbox" viewBox="0 0 34 34"><rect width="34" height="34" rx="2.500" fill="#0075ff"/><path d="M7 18l7 7.500L28 7.500" fill="none" stroke="#fff" stroke-width="5"/></svg></div><label class="l2 etat">Etat :</label><svg class="lock"><use href="#e-lock"/></svg>
            </div>
            <div class="buttons"><button class="btn ok">Modifier</button><button class="btn">Annuler</button></div>
          </fieldset>
          <fieldset class="fs-list">
            <legend>[ Liste des microfinances du programme ]</legend>
            <div class="table">
              <div class="tr th"><span>No</span><span>Microfinance</span><span class="act">Action(s)</span></div>
              <div class="tr"><span>1</span><span>UNACOOPEC</span><span class="lockcell"><svg class="lock"><use href="#e-lock"/></svg></span></div>
            </div>
          </fieldset>
        </section>
      </div>
    </div>
    <div class="page-scroll"><i class="arr-up"></i><i class="thumb"></i><i class="arr-down"></i></div>
  </div>

  <footer class="taskbar">
    <div class="weather"><svg><use href="#t-weather"/></svg><div class="temp">30°C<br>Eclaircies</div></div>
    <svg class="start"><use href="#t-win"/></svg>
    <div class="searchbox"><svg class="mag"><use href="#t-mag"/></svg>Rechercher<svg class="mount" viewBox="0 0 50 24"><path d="M4 18L14 6l5 2 7-8 12 7 9 11z" fill="#4a8fc0"/><path d="M14 6l5 2 7-8 4 3-3 6-4-2-3 5-4-2-6 4z" fill="#e6f2fa"/><path d="M0 21q12-8 24-4t25-3q-2 9-14 10H5q-5-1-5-3z" fill="#c9d4ec"/><path d="M5 21q15 0 34-2-6 4-14 4H6z" fill="#2da3ad"/></svg></div>
    <div class="apps">
      <span><svg><use href="#t-view"/></svg></span><span><svg><use href="#t-teams"/></svg></span><span class="run"><svg><use href="#t-edge"/></svg></span><span class="run"><svg><use href="#t-folder"/></svg></span><span><svg><use href="#t-mail"/></svg></span><span><svg><use href="#t-store"/></svg></span><span><svg><use href="#t-diamond"/></svg></span><span class="focus"><svg><use href="#t-chrome"/></svg></span><span><svg><use href="#t-fox"/></svg></span><span><svg><use href="#t-opera"/></svg></span><span><svg><use href="#t-mask"/></svg></span><span><svg><use href="#t-code"/></svg></span><span><svg><use href="#t-skills"/></svg></span><span class="run"><svg><use href="#t-spotify"/></svg></span><span class="run"><svg><use href="#t-word"/></svg></span><span class="run"><svg><use href="#t-vscode"/></svg></span><span class="run"><svg><use href="#t-npp"/></svg></span><span class="run"><svg><use href="#t-note"/></svg></span>
    </div>
    <div class="tray"><div class="clock">12:17<br>05/01/2024</div><svg class="copilot"><use href="#t-copilot"/></svg></div>
  </footer>
</section>

</main>
</body>
</html>
```
FILE: styles.css
```css
* { box-sizing: border-box; }
body { margin: 0; background: #fff; font-family: "Open Sans", "Noto Sans", sans-serif; }
svg { display: block; flex: none; }
button { font: inherit; border: 0; padding: 0; }
h1, h2, h3, p, pre { margin: 0; font-weight: 400; }
i, em { font-style: normal; }
.defs { position: absolute; }

.desktop { display: flex; width: 3840px; height: 1080px; overflow: hidden; }
.screen { width: 1920px; height: 1080px; display: flex; flex-direction: column; overflow: hidden; }

/* ---- browser frame ---- */
.tabstrip { display: flex; align-items: center; flex: none; background: #b9babc; color: #44474a; }
.tab-search { background: #e3e4e6; color: #222; display: flex; align-items: center; justify-content: center; flex: none; }
.tabs { display: flex; height: 100%; flex: none; }
.tab { position: relative; display: flex; align-items: center; flex: none; height: 100%; }
.tab::after { content: ""; position: absolute; right: 2px; width: 2px; background: #e3e4e6; }
.tab.nosep::after, .tab.active::after { display: none; }
.tab > * { position: relative; }
.ttl { overflow: hidden; white-space: nowrap; flex: none; -webkit-mask-image: linear-gradient(90deg, #000 calc(100% - 18px), transparent); mask-image: linear-gradient(90deg, #000 calc(100% - 18px), transparent); }
.tab.active { color: #222; }
.tab.active::before { content: ""; position: absolute; bottom: 0; background: #e3e4e6; border-radius: 12px 12px 0 0; }
.x { color: #3a3c3f; }
.tab.active .x { color: #1f1f1f; }
.newtab { color: #3a3c3f; }
.winbtns { display: flex; margin-left: auto; }
.toolbar { display: flex; align-items: center; flex: none; background: #e3e4e6; color: #222; }
.nav, .exts, .tools { display: grid; grid-auto-flow: column; align-items: center; justify-items: center; flex: none; }
.nav .off { color: #85878a; }
.omnibox { display: flex; align-items: center; flex: none; background: #c7c8ca; border-radius: 21px; }
.tune { background: #e3e4e6; border-radius: 50%; display: flex; align-items: center; justify-content: center; flex: none; }
.url { color: #1f1f1f; white-space: nowrap; }
.url i { color: #5a5c5f; }
.bookmark { margin-left: auto; color: #55585b; }
.ext { position: relative; }
.count { position: absolute; background: #6434bd; color: #fff; text-align: center; border-radius: 4px; font-weight: 600; }
.profile { background: #c2185b; color: #fff; border-radius: 50%; text-align: center; }

.screen-left .tabstrip { height: 50px; padding-left: 8px; font-size: 13.9px; }
.screen-left .tab-search { width: 35px; height: 34px; border-radius: 11px; margin-right: 7px; }
.screen-left .tab-search svg { width: 16px; height: 16px; }
.screen-left .tab { width: 159.800px; padding-left: 10px; }
.screen-left .tab::after { height: 20px; }
.screen-left .tab.active::before { left: 0; right: 7px; height: 43px; }
.screen-left .fav { width: 20px; height: 20px; margin-right: 10px; }
.screen-left .ttl { width: 74px; line-height: 22px; }
.screen-left .ttl-audio { width: 54px; }
.screen-left .aud { width: 16px; height: 16px; margin-left: 5px; margin-right: -1px; }
.screen-left .x { width: 12px; height: 12px; margin-left: 12px; }
.screen-left .newtab { width: 14px; height: 14px; margin-left: 8px; }
.screen-left .winbtns { gap: 43px; margin-right: 22px; color: #555; }
.screen-left .winbtns svg { width: 14px; height: 14px; }
.screen-left .toolbar { height: 59px; border-bottom: 2px solid #75777a; padding-left: 5px; }
.screen-left .nav { grid-auto-columns: 45px; width: 191px; }
.screen-left .nav svg { width: 19px; height: 19px; }
.screen-left .omnibox { width: 1101px; height: 42px; padding: 0 20px 0 5px; font-size: 16.600px; }
.screen-left .tune { width: 30px; height: 30px; margin-right: 10px; }
.screen-left .tune svg { width: 18px; height: 18px; }
.screen-left .bookmark { width: 23px; height: 23px; }
.screen-left .exts { grid-auto-columns: 45px; width: 403px; height: 42px; margin-left: 12px; border: 2px solid #cbccce; border-radius: 21px; justify-content: center; }
.screen-left .exts svg { width: 21px; height: 21px; }
.screen-left .count { width: 18px; height: 18px; right: -7px; bottom: -8px; font-size: 12px; line-height: 18px; }
.screen-left .tools { grid-auto-columns: 45px; margin-left: 10px; padding-left: 12px; background: linear-gradient(#c3c4c6, #c3c4c6) no-repeat 0 50% / 2px 20px; }
.screen-left .tools svg { width: 20px; height: 20px; }
.screen-left .profile { width: 25px; height: 25px; font-size: 12px; line-height: 25px; }

.screen-right .tabstrip { height: 40px; padding-left: 6px; font-size: 11.500px; }
.screen-right .tab-search { width: 28px; height: 28px; border-radius: 9px; margin-right: 6px; }
.screen-right .tab-search svg { width: 13px; height: 13px; }
.screen-right .tab { width: 238px; padding-left: 8px; }
.screen-right .tab::after { height: 16px; right: 5px; }
.screen-right .tab.active::before { left: 0; right: 8px; height: 34px; border-radius: 10px 10px 0 0; }
.screen-right .fav { width: 16px; height: 16px; margin-right: 8px; }
.screen-right .ttl { width: 168px; line-height: 20px; }
.screen-right .x { width: 10px; height: 10px; margin-left: 11px; }
.screen-right .newtab { width: 11px; height: 11px; margin-left: 8px; }
.screen-right .winbtns { gap: 36px; margin-right: 18px; color: #111; }
.screen-right .winbtns svg { width: 10px; height: 10px; }
.screen-right .toolbar { height: 47px; border-bottom: 1px solid #a9abad; padding-left: 4px; }
.screen-right .nav { grid-auto-columns: 36px; width: 152px; }
.screen-right .nav svg { width: 15px; height: 15px; }
.screen-right .omnibox { width: 1266px; height: 34px; padding: 0 16px 0 4px; font-size: 13.400px; }
.screen-right .tune { width: 24px; height: 24px; margin-right: 9px; }
.screen-right .tune svg { width: 14px; height: 14px; }
.screen-right .bookmark { width: 18px; height: 18px; }
.screen-right .exts { grid-auto-columns: 36px; margin-left: 8px; }
.screen-right .exts svg { width: 17px; height: 17px; }
.screen-right .count { width: 16px; height: 14px; right: -6px; bottom: -6px; font-size: 10px; line-height: 14px; }
.screen-right .tools { grid-auto-columns: 36px; margin-left: 8px; padding-left: 9px; background: linear-gradient(#c3c4c6, #c3c4c6) no-repeat 0 50% / 2px 16px; }
.screen-right .tools svg { width: 16px; height: 16px; }
.screen-right .profile { width: 20px; height: 20px; font-size: 10px; line-height: 20px; }

/* ---- webmail ---- */
.owa-head { height: 63px; flex: none; background: #000; color: #fff; display: flex; align-items: center; }
.waffle { width: 64px; height: 63px; background: #0078d7; display: flex; align-items: center; justify-content: center; }
.waffle svg { width: 23px; height: 21px; }
.owa-head h1 { font-size: 25.200px; margin-left: 25px; line-height: 30px; }
.owa-actions { margin-left: auto; display: flex; align-items: center; height: 100%; margin-right: 1px; }
.owa-actions span { width: 62.500px; height: 100%; border-left: 1px solid #4a4a4a; display: flex; align-items: center; justify-content: center; padding-bottom: 3px; }
.owa-actions span svg { width: 22px; height: 22px; }
.owa-actions .help { font-size: 27px; font-weight: 700; width: 69px; padding-right: 6px; }
.avatar { width: 62px; height: 63px; }
.owa-bar { height: 50px; flex: none; display: flex; font-size: 16.200px; color: #333; }
.owa-search { width: 372px; background: #deecf9; display: flex; align-items: center; justify-content: space-between; padding: 0 13px 2px 22px; border-right: 1px solid #e2eaf2; color: #666; }
.owa-search span { letter-spacing: -.06px; }
.owa-search svg { width: 22px; height: 22px; margin-top: -6px; }
.commands { flex: 1; background: #eff6fc; display: grid; align-items: center; padding-left: 35px; padding-top: 1px; white-space: nowrap; grid-template-columns: 30px 131px 25px 111px 28px 89px 207px 81px 154px 133px 403px 27px 1fr; }
.cmd { display: flex; align-items: center; }
.bar { width: 1px; height: 18px; background: #999; margin: 0 6px 0 6px; }
.chev { width: 14px; height: 14px; color: #666; margin-top: -4px; }
.chev.wide { margin-left: 4px; }
.c-add { width: 20px; height: 20px; }
.c-trash { width: 16px; height: 20px; }
.c-arch { width: 20px; height: 17px; }
.c-undo { width: 16px; height: 18px; margin-top: -4px; }
.more { font-size: 14px; letter-spacing: -.2px; color: #333; font-family: "DejaVu Sans", sans-serif; }
.muted { color: #a6a6a6; }

.owa-main { flex: 1; min-height: 0; display: grid; grid-template-columns: 372px 469px 1fr; grid-template-rows: 798px; overflow: hidden; }
.folders { background: #f4f4f4; border-right: 1px solid #e1e1e1; padding-top: 19.500px; font-size: 15.900px; color: #444; letter-spacing: -.05px; }
.folders div { height: 37.500px; display: flex; align-items: center; }
.folders svg { width: 12px; height: 12px; color: #444; }
.folders b, .folders em { margin-left: auto; margin-right: 36px; }
.folders b { color: #0072c6; font-weight: 600; font-size: 16.400px; }
.root { padding-left: 20px; gap: 11px; }
.folders .first-root { padding-top: 10px; }
.folders .fav-item { padding-left: 49px; padding-top: 1px; }
.folders .selected { padding-left: 53px; gap: 11px; background: #c7dff4; font-weight: 600; color: #333; font-size: 16.300px; }
.folders .sub { padding-left: 101px; }
.folders .top { padding-left: 76px; }

.list { border-right: 1px solid #dcdcdc; display: flex; flex-direction: column; overflow: hidden; }
.list-head { height: 63px; flex: none; display: flex; justify-content: space-between; padding: 24px 31px 0 39px; color: #333; }
.list-head h2 { font-size: 24.700px; line-height: 34px; }
.filter { color: #2b88d8; font-size: 18.500px; line-height: 36px; display: flex; align-items: center; gap: 10px; height: 36px; }
.filter svg { width: 18px; height: 18px; color: #0078d7; }
.list-body { flex: 1; min-height: 0; display: flex; }
.msgs { width: 447px; overflow: hidden; }
.msg { position: relative; height: 100px; padding: 11px 10px 0 37px; overflow: hidden; }
.msg.pinned { background: #fffcd8; }
.msg.current { background: #c7dff4; }
.msg.unread::before { content: ""; position: absolute; left: 0; top: 0; width: 4px; height: 99px; background: #2b88d8; }
.who { font-size: 20.800px; font-weight: 300; color: #333; line-height: 28px; display: flex; letter-spacing: -.05px; }
.marks { margin-left: auto; display: flex; align-items: center; gap: 15px; margin-right: 5px; height: 20px; }
.m-reply { width: 19px; height: 17px; margin-right: -2px; }
.m-flag { width: 13px; height: 18px; margin-left: 1px; }
.m-pin { width: 11px; height: 18px; }
.m-clip { width: 11px; height: 18px; margin-right: 4px; }
.marks.single .m-clip { margin-right: 0; }
.bang { color: #b3001b; font-size: 24px; line-height: 20px; margin-right: 3px; font-weight: 700; }
.subj { display: flex; justify-content: space-between; line-height: 24px; font-size: 14.200px; color: #222; }
.subj span { width: 299px; overflow: hidden; white-space: nowrap; }
.subj time { color: #777; font-size: 13.200px; letter-spacing: -.25px; line-height: 26px; }
.unread .subj { color: #0072d0; font-weight: 600; font-size: 14.100px; }
.unread .wide-subj { letter-spacing: .2px; }
.unread .subj time { color: #0072d0; font-size: 13.600px; letter-spacing: -.5px; }
.prev { font-size: 13.900px; letter-spacing: 0; line-height: 26px; color: #777; white-space: nowrap; }
.group { height: 38px; padding: 0 0 2px 38px; line-height: 37px; font-size: 14.200px; font-weight: 600; color: #0072d0; border-bottom: 2px solid #e4e4e4; }
.check { position: absolute; left: 13px; top: 14px; width: 17px; height: 17px; background: #fff; border: 1px solid #c8c8c8; }

.scroll { display: flex; flex-direction: column; align-items: center; }
.arr-up, .arr-down { border: 5px solid transparent; width: 0; height: 0; }
.arr-up { border-bottom-color: #c6c9cc; border-top: 0; }
.arr-down { border-top-color: #c6c9cc; border-bottom: 0; margin-top: auto; }
.thumb { width: 8px; border-radius: 4px; background: #c4c4c4; }
.list-scroll { width: 21px; padding: 8px 0 7px; }
.list-scroll .thumb { height: 48px; margin-top: 16px; }
.reader { display: flex; position: relative; overflow: hidden; padding-left: 99px; }
.quote { width: 952px; height: 739px; border-left: 2px solid #c3c3c3; padding-left: 12px; flex: none; color: #222; }
.read-scroll { margin-left: auto; width: 17px; margin-right: 2px; padding: 8px 0 7px; }
.read-scroll .thumb { height: 389px; margin-top: 368px; }
.hdr { font: 17.100px/27px "Lato", "Open Sans", sans-serif; white-space: nowrap; overflow: hidden; height: 27px; }
.hdr.cut { margin-top: -21px; }
.mono { font: 20px/27px "DejaVu Sans Mono", monospace; margin-top: 26px; color: #222; }
.mono mark { background: #c6c6c6; color: #333; display: inline-block; height: 27px; vertical-align: top; }
.mono b { letter-spacing: .34px; }
.ink { color: #000; }
.sig { font: 700 21.900px/28px "Lato", "Open Sans", sans-serif; letter-spacing: .05px; }
.sig .dash { font-weight: 400; line-height: 27px; }
.sig .n { font-size: 21.600px; letter-spacing: -.2px; }
.green { color: #38761d; }
.orange { color: #ff9900; }
.mailto { color: #0000ee; text-decoration: underline; }
.phone { font-weight: 400; font-size: 21.100px; letter-spacing: 0; }

/* ---- taskbars ---- */
.taskbar { display: flex; align-items: center; flex: none; color: #fff; position: relative; border-top: 1px solid #454545; }
.apps { display: flex; height: 100%; flex: none; }
.apps span { position: relative; display: flex; align-items: center; justify-content: center; height: 100%; }
.apps svg { position: relative; }
.apps .run::after, .apps .focus::after { content: ""; position: absolute; border-radius: 3px; background: #9a9a9a; }
.apps .focus::after { background: #d99fe3; }
.apps .focus::before { content: ""; position: absolute; background: rgba(255, 255, 255, .09); border: 1px solid rgba(255, 255, 255, .08); border-radius: 6px; }
.clock, .lang { white-space: nowrap; }
.clock { text-align: right; }

.screen-left .taskbar { height: 60px; background: linear-gradient(90deg, #1c2726, #212121 160px); }
.screen-left .weather { width: 359px; padding-left: 26px; display: flex; flex: none; }
.screen-left .weather svg { width: 31px; height: 29px; }
.screen-left .weather .temp { background: #2a2a2a; border-radius: 8px 0 0 8px; font-size: 12.500px; height: 18px; line-height: 18px; width: 22px; padding-left: 4px; margin: -5px 0 0 -19px; overflow: hidden; z-index: 1; }
.screen-left .apps span { width: 55.100px; }
.screen-left .apps svg { width: 30px; height: 30px; }
.screen-left .apps .run::after { width: 8px; height: 4px; bottom: 6px; }
.screen-left .apps .focus::after { width: 20px; height: 4px; bottom: 5px; }
.screen-left .apps .focus::before { inset: 4px 3px; }
.tray { display: flex; align-items: center; margin-left: auto; }
.caret { width: 15px; height: 15px; margin-right: 26px; }
.lang { text-align: center; font-size: 13.700px; line-height: 20px; width: 30px; margin-right: 23px; }
.sys { width: 20px; height: 20px; margin-right: 10px; }
.screen-left .clock { font-size: 14.200px; line-height: 20px; width: 88px; }
.screen-left .bell { width: 17px; height: 21px; margin-left: 10px; }
.screen-left .copilot { width: 30px; height: 30px; margin: 0 23px 0 23px; }

.screen-right .taskbar { height: 48px; border-top-color: #55555a; background: linear-gradient(90deg, #242424, #241f2b 200px, #241d38 420px, #2b1a3c 600px, #3c1a30 740px, #3b241e 860px, #3a2020 1000px, #4a1420 1150px, #4e1414 1330px, #421815 1500px, #3a1a17 1750px, #301a1c 1920px); }
.screen-right .weather { width: 440px; padding-left: 18px; display: flex; align-items: center; gap: 8px; font-size: 11.500px; line-height: 16px; color: #e2dde2; flex: none; }
.screen-right .weather svg { width: 25px; height: 24px; }
.start { width: 24px; height: 24px; }
.searchbox { width: 220px; height: 32px; margin-left: 13px; border-radius: 16px; background: rgba(255, 255, 255, .17); border: 1px solid rgba(255, 255, 255, .1); display: flex; align-items: center; font-size: 13px; color: #d2cbd6; padding: 0 2px 0 10px; flex: none; }
.mag { width: 17px; height: 17px; margin-right: 9px; }
.mount { width: 50px; height: 24px; margin-left: auto; }
.screen-right .apps { margin-left: 2px; }
.screen-right .apps span { width: 44px; }
.screen-right .apps svg { width: 24px; height: 24px; }
.screen-right .apps .run::after { width: 6px; height: 3px; bottom: 5px; }
.screen-right .apps .focus::after { width: 16px; height: 3px; bottom: 5px; }
.screen-right .apps .focus::before { inset: 3px 2px; }
.screen-right .clock { font-size: 11.700px; line-height: 16px; color: #ddd; }
.screen-right .copilot { width: 24px; height: 24px; margin: 0 20px 0 19px; }

/* ---- e-Social ---- */
.page { flex: 1; min-height: 0; display: flex; font-family: "Liberation Sans", Arial, sans-serif; }
.page-view { width: 1903px; display: flex; flex-direction: column; }
.page-scroll { width: 17px; background: #f6f6f6; border-left: 1px solid #eee; display: flex; flex-direction: column; align-items: center; padding: 7px 0; }
.page-scroll .thumb { width: 13px; border-radius: 0; height: 893px; background: #c1c1c1; margin-top: 5px; }
.page-scroll .arr-up { border-width: 4px; border-top: 0; border-bottom-color: #8a8a8a; }
.page-scroll .arr-down { border-width: 4px; border-bottom: 0; border-top-color: #444; }
.es-head { height: 44px; flex: none; background: #30a93c; border-bottom: 1px solid #dfe3df; color: #fff; display: flex; padding-left: 129px; }
.logo { width: 54px; height: 24px; margin-top: 7px; text-align: center; background: radial-gradient(closest-side, rgba(255, 255, 255, .95) 50%, rgba(255, 255, 255, 0)); line-height: 1; display: flex; flex-direction: column; align-items: center; }
.logo small { font-size: 5px; color: #f0913a; padding-top: 4px; white-space: nowrap; }
.logo b { font: italic 700 13px/11px "Liberation Serif", serif; color: #3f9c3a; padding-left: 10px; }
.brand { font-size: 17.800px; line-height: 36px; margin-left: 8px; width: 1220px; }
.es-user { font-size: 13px; display: flex; align-items: center; height: 40px; border-left: 1px solid #279333; padding-bottom: 4px; white-space: nowrap; box-shadow: inset 1px 0 #46bb52; }
.es-user svg { margin-right: 4px; }
.first { width: 181px; padding-left: 20px; }
.first svg { width: 22px; height: 20px; margin-top: 4px; }
.second { padding-left: 19px; }
.second svg { width: 21px; height: 18px; margin-top: 5px; margin-right: 6px; }
.tri { border: 4px solid transparent; border-top-color: #fff; border-bottom: 0; margin: 2px 0 0 6px; }
.es-body { flex: 1; display: flex; padding-left: 113px; color: #222; min-height: 0; }
.es-side { width: 240px; background: #eee; border: solid #c8c8c8; border-width: 0 1px; display: flex; flex-direction: column; font-size: 13px; flex: none; }
.date { position: relative; height: 51px; text-align: center; line-height: 44px; border-bottom: 1px solid #c4c4c4; padding-right: 2px; }
.toggle { position: absolute; right: 5px; top: 1px; width: 15px; height: 10px; background: #8e8e8e; box-shadow: inset 0 2px #8e8e8e, inset 0 3px #eee; }
.menu { height: 35px; background: #dfdfdf; border-top: 1px solid #f4f4f4; display: flex; align-items: center; gap: 4px; padding-left: 13px; padding-bottom: 1px; }
.menu svg { width: 13px; height: 12px; }
.menu.last { height: 36px; border-bottom: 1px solid #c4c4c4; }
.copy { margin: auto auto 11px; width: 179px; height: 90px; background: #fff; border: 1px solid #e2e2e2; border-radius: 5px; text-align: center; font-size: 10.950px; color: #000; padding-top: 6px; }
.copy p { line-height: 26px; }
.es-content { width: 1439px; padding: 20px 29px 0 30px; border-right: 1px solid #c8c8c8; }
.crumbs { height: 33px; border: 1px solid #e5e5e5; border-radius: 4px; background: linear-gradient(#fff, #f2f2f2); display: grid; align-items: center; font-size: 11.950px; grid-template-columns: 12px 17px 62px 16px 118px 15px auto; justify-content: start; padding-left: 11px; padding-bottom: 1px; white-space: nowrap; }
.crumbs svg { width: 12px; height: 12px; }
.crumbs a { color: #2f6b49; }
.crumbs i { width: 1px; height: 17px; background: #dedede; transform: rotate(-10deg); justify-self: center; }
.es-content h3 { font-size: 17.900px; line-height: 34px; margin-top: 16px; border-bottom: 1px solid #d9d9d9; height: 37px; }
fieldset { border: 1px solid #3fa975; border-radius: 4px; margin: 0; padding: 0; min-width: 0; }
legend { padding: 0; color: #3fa975; font-weight: 700; font-size: 14px; line-height: 20px; white-space: nowrap; margin-left: -1px; }
.fs-form { margin-top: 29px; height: 241px; }
.fs-list { margin-top: 10px; height: 143px; }
.req { height: 46px; padding-top: 20px; padding-right: 72px; line-height: 20px; text-align: right; color: #f00; font-size: 13px; }
.form { display: grid; grid-template-columns: 122px 15px 440px 177px 39px 440px; grid-template-rows: 34px 34px 41px; row-gap: 6px; padding-left: 71px; font-size: 12.950px; }
.form label { line-height: 18px; padding-top: 6px; white-space: nowrap; }
.form .l2 { padding-left: 6px; }
.form .two { padding-top: 0; margin-top: -1px; letter-spacing: -.05px; }
.form .etat { padding-top: 9px; }
.form em { color: #f00; padding: 9px 0 0 4px; font-size: 13px; line-height: 18px; }
.input { border: 1px solid #ccc; border-radius: 4px; padding: 0 12px; box-shadow: inset 0 1px 1px rgba(0, 0, 0, .075); }
.input span { display: block; overflow: hidden; white-space: nowrap; font-size: 14px; line-height: 33px; height: 32px; color: #555; }
.checkcell { margin-top: 6px; border-top: 1px solid #ececec; display: flex; padding-left: 202px; }
.checkbox { width: 35px; height: 34px; margin-top: -1px; }
.lock { width: 16px; height: 16px; }
.form .lock { margin: 13px 0 0 1px; }
.buttons { display: flex; justify-content: flex-end; gap: 3px; padding: 6px 72px 0 0; }
.btn { height: 34px; width: 75px; border: 1px solid #ccc; border-radius: 4px; background: #fff; color: #333; font-size: 14px; line-height: 31px; }
.btn.ok { background: #5cb85c; border-color: #4cae4c; color: #fff; width: 76px; }
.table { margin-top: 19px; border: 1px solid #ddd; border-width: 1px 0; font-size: 13px; }
.tr { display: grid; grid-template-columns: 226px 666px 1fr; height: 34px; background: #f9f9f9; line-height: 33px; }
.tr > span { padding-left: 10px; border-right: 1px solid #ddd; }
.th { background: #cecece; font-weight: 700; border-bottom: 2px solid #ddd; height: 37px; line-height: 35px; color: #333; }
.th .act { text-align: center; padding: 0; }
.tr > .lockcell { padding: 8px 0 0 105px; }
```
